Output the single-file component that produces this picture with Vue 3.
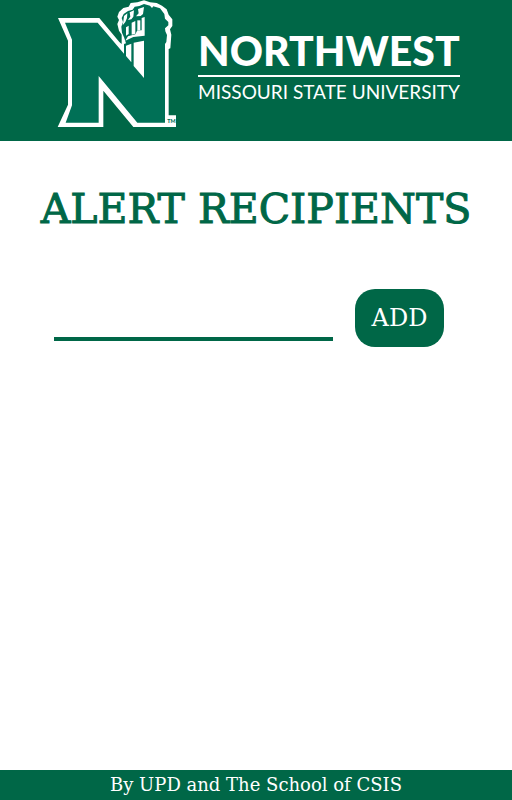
<script setup>
import { ref } from 'vue'

const recipient = ref('')
const recipients = ref([])

function addRecipient() {
  const value = recipient.value.trim()
  if (!value) return
  recipients.value.push(value)
  recipient.value = ''
}
</script>

<template>
  <div class="page">
    <header class="banner">
      <svg class="logo" viewBox="18 0 360 390" role="img" aria-label="Northwest bell tower logo">
        <!-- white silhouette -->
        <path
          fill="#fff"
          d="M24 54H148L208 126L215 132V104L207 92L202 72L207 60L202 50L207 36L220 24L236 20L242 9L262 7L282 1L300 7L320 9L336 17L350 28L356 44L367 58V78L360 88L364 104L361 145L356 147V346H378V381H250L160 272V381H23L54 314V122Z"
        />
        <!-- letter and tower body -->
        <path
          fill="#007056"
          d="M45 68H143L222 161V132L228 130L222 112L216 98L214 80L219 66L215 54L221 42L234 33L248 29L254 20L268 18L282 12L300 17L306 24L310 19L330 25L343 42L345 56L355 66V76L345 85L346 94L351 105L349 126L345 132V368H262L146 228V368H47L66 316V119Z"
        />
        <!-- belfry openings and lit columns -->
        <g fill="#fff">
          <path d="M222 48L232 40L231 54L226 66L218 76L220 64Z" />
          <path d="M239 37L252 31L250 50L244 58L234 60L241 50Z" />
          <path d="M264 27L282 21L279 42L272 48L258 49L266 40Z" />
          <path d="M228 82L236 77V102L228 107Z" />
          <path d="M245 68L256 63V101L245 104Z" />
          <path d="M262 61H271V90H262Z" />
          <path d="M275 54L284 51V107L250 111L226 122L234 109L256 103L262 91H275Z" />
          <path d="M228 137L244 131V187L228 168Z" />
          <path d="M251 128L282 122V234L251 198Z" />
        </g>
        <text class="mark" x="364" y="368" text-anchor="middle">TM</text>
      </svg>
      <div class="wordmark">
        <span class="name">NORTHWEST</span>
        <span class="university">MISSOURI STATE UNIVERSITY</span>
      </div>
    </header>

    <main class="content">
      <h1 class="title">ALERT RECIPIENTS</h1>
      <form class="entry" @submit.prevent="addRecipient">
        <input v-model="recipient" class="field" type="text" aria-label="Recipient" />
        <button class="add" type="submit">ADD</button>
      </form>
      <ul v-if="recipients.length" class="list">
        <li v-for="(item, index) in recipients" :key="index">{{ item }}</li>
      </ul>
    </main>

    <footer class="footer">By UPD and The School of CSIS</footer>
  </div>
</template>

<style>
body {
  margin: 0;
}
</style>

<style scoped>
.page {
  display: flex;
  flex-direction: column;
  min-height: 100vh;
  background: #fff;
  color: #006747;
  font-family: "DejaVu Serif", serif;
}

.banner {
  display: flex;
  justify-content: center;
  align-items: flex-start;
  gap: 22px;
  padding: 0 0 11px 4px;
  background: #006747;
  color: #fff;
  font-family: Lato, sans-serif;
}

.logo {
  display: block;
  flex: none;
  width: 120px;
  height: 130px;
}

.mark {
  fill: #007056;
  font-size: 16px;
  font-weight: 900;
}

.wordmark {
  display: flex;
  flex-direction: column;
  padding-top: 26px;
  white-space: nowrap;
}

.name {
  border-bottom: 2px solid #fff;
  font-size: 41px;
  font-weight: 900;
  line-height: 49px;
}

.university {
  padding-top: 4px;
  font-size: 19px;
  line-height: 22px;
}

.content {
  flex: 1;
}

.title {
  margin: 0;
  padding-top: 40px;
  font-size: 41px;
  font-weight: 400;
  line-height: 56px;
  text-align: center;
  white-space: nowrap;
  -webkit-text-stroke: 1px #006747;
}

.entry {
  display: flex;
  align-items: flex-start;
  gap: 22px;
  padding: 52px 68px 0 54px;
}

.field {
  box-sizing: border-box;
  flex: 1;
  min-width: 0;
  height: 52px;
  padding: 0 4px;
  border: 0;
  border-bottom: 4px solid #006747;
  border-radius: 0;
  outline: 0;
  background: transparent;
  color: inherit;
  font-family: inherit;
  font-size: 20px;
}

.add {
  width: 89px;
  height: 58px;
  padding: 0;
  border: 0;
  border-radius: 20px;
  background: #006747;
  color: #fff;
  font-family: inherit;
  font-size: 24px;
  cursor: pointer;
}

.list {
  margin: 24px 68px 24px 54px;
  padding: 0;
  list-style: none;
  font-size: 16px;
  line-height: 28px;
}

.footer {
  background: #006747;
  color: #fff;
  font-size: 18px;
  line-height: 30px;
  text-align: center;
}
</style>
